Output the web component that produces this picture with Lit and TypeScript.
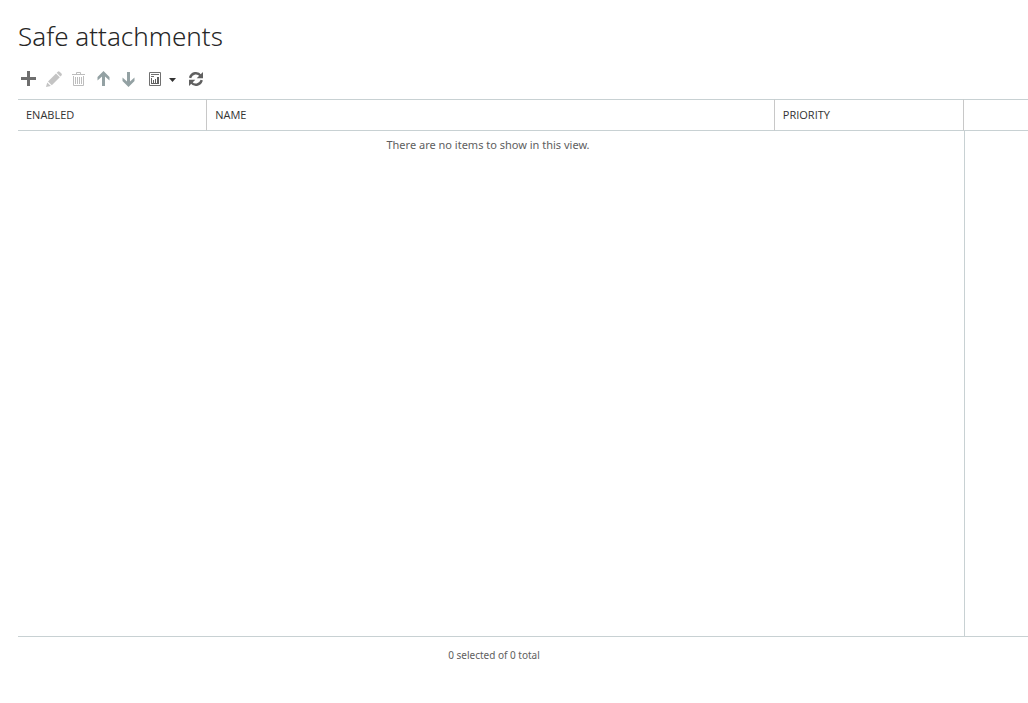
import { LitElement, html, css, svg } from "lit";
import { customElement, property } from "lit/decorators.js";

const icons = {
  add: svg`<path fill="#6e6e6e" d="M9 2h3v6h6v3h-6v6H9v-6H3V8h6z"/>`,
  edit: svg`<g fill="#c4c4c4"><path d="M3 18l1.2-4.6 3.6 3.5z"/><path d="M5 12.4l8-7.9 3.8 3.8-8 7.9z"/><path d="M13.7 3.8l1.1-1.1q.9-.9 1.8 0l1.9 1.9q.9.9 0 1.8l-1.1 1.1z"/></g>`,
  remove: svg`<g fill="none" stroke="#bdbdbd"><path d="M4 5.5h13M8.5 5V3.5h4V5M5.500 7v9.500h10V7M7.500 8v7M9.500 8v7M11.500 8v7M13.500 8v7"/></g>`,
  up: svg`<path fill="#93a1a3" d="M10.500 2L16.500 8v3.600L12 7.400V17H9V7.400L4.500 11.600V8z"/>`,
  down: svg`<path fill="#93a1a3" d="M10.500 18L4.500 12V8.400L9 12.600V3h3v9.600l4.500-4.200V12z"/>`,
  refresh: svg`<g fill="none" stroke="#606060" stroke-width="2.4"><path d="M4 8.800C5.800 3.400 11.800 2.900 14.600 6.600M15.800 11.200C14 16.600 8 17.100 5.200 13.400"/></g><path fill="#606060" d="M17 3v6.300h-6.300zM3 17v-6.300h6.300z"/>`,
};

@customElement("list-toolbar")
class ListToolbar extends LitElement {
  static styles = css`
    :host { display: flex; gap: 5px; height: 20px; }
    button { display: block; padding: 0; border: 0; background: none; height: 20px; }
    svg { display: block; }
  `;

  button(label: string, icon: unknown, disabled = false) {
    return html`<button type="button" aria-label=${label} title=${label} ?disabled=${disabled}>
      <svg width="20" height="20" viewBox="0 0 20 20" aria-hidden="true">${icon}</svg>
    </button>`;
  }

  render() {
    return html`
      ${this.button("New", icons.add)}
      ${this.button("Edit", icons.edit, true)}
      ${this.button("Delete", icons.remove, true)}
      ${this.button("Move up", icons.up, true)}
      ${this.button("Move down", icons.down, true)}
      <button type="button" aria-label="Reports" title="Reports" aria-haspopup="menu">
        <svg width="38" height="20" viewBox="0 0 38 20" aria-hidden="true">
          <path fill="none" stroke="#707070" d="M6.500 3.500h11v13h-11zM8 5.500h8M8 7.500h3"/>
          <path fill="#606060" d="M8 9h1v5h7v1H8zM10 11h1v3h-1zM12 10h1v4h-1zM14 8h2v6h-2z"/>
          <path fill="#333" d="M26 9h7l-3.500 4z"/>
        </svg>
      </button>
      ${this.button("Refresh", icons.refresh)}
    `;
  }
}

@customElement("policy-list")
class PolicyList extends LitElement {
  @property({ type: Array }) columns: string[] = [];

  static styles = css`
    :host { display: flex; border-bottom: 1px solid #c8d1d3; }
    .list { flex: 1; }
    table { width: 100%; table-layout: fixed; border-collapse: separate; border-spacing: 0; }
    .narrow { width: 20%; }
    th {
      box-sizing: border-box; height: 32px; padding: 0 8px; text-align: left;
      font-family: "Open Sans", "Noto Sans", sans-serif;
      font-size: 11px; line-height: 16px; font-weight: 400; color: #333;
      border: solid #c8d1d3; border-width: 1px 0; border-right: 1px solid #c8c8c8;
    }
    td {
      padding: 6px 6px 0 0; text-align: center;
      font-size: 11px; line-height: 16px; color: #5e5e5e;
    }
    .details { width: 64px; display: flex; flex-direction: column; }
    .head { box-sizing: border-box; height: 32px; border: solid #c8d1d3; border-width: 1px 0; }
    .pane { flex: 1; border-left: 1px solid #c8d1d3; }
  `;

  render() {
    return html`
      <div class="list">
        <table>
          <colgroup><col class="narrow" /><col /><col class="narrow" /></colgroup>
          <thead><tr>${this.columns.map((c) => html`<th scope="col">${c}</th>`)}</tr></thead>
          <tbody><tr><td colspan="3">There are no items to show in this view.</td></tr></tbody>
        </table>
      </div>
      <div class="details"><div class="head"></div><div class="pane"></div></div>
    `;
  }
}

@customElement("app-root")
class AppRoot extends LitElement {
  static styles = css`
    :host {
      box-sizing: border-box; display: flex; flex-direction: column;
      min-height: 100vh; padding: 16px 0 40px 18px; background: #fff;
      font-family: "Noto Sans", "Open Sans", sans-serif;
    }
    h1 { margin: 0 0 13px; font-size: 26px; line-height: 40px; font-weight: 300; color: #262626; }
    list-toolbar { margin-bottom: 10px; }
    policy-list { flex: 1; }
    footer {
      padding: 10px 58px 0 0; text-align: center;
      font-size: 10px; line-height: 16px; color: #5e5e5e;
    }
  `;

  render() {
    return html`
      <h1>Safe attachments</h1>
      <list-toolbar role="toolbar" aria-label="List actions"></list-toolbar>
      <policy-list .columns=${["ENABLED", "NAME", "PRIORITY"]}></policy-list>
      <footer>0 selected of 0 total</footer>
    `;
  }
}
